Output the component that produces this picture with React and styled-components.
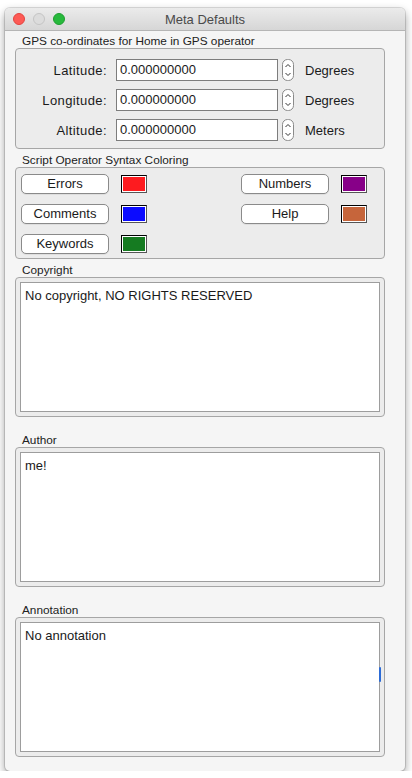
import React from 'react';
import styled, { createGlobalStyle } from 'styled-components';

// Global page reset
const GlobalStyle = createGlobalStyle`
  body {
    margin: 0;
    background: #ffffff;
    font-family: "Liberation Sans", Arial, Helvetica, sans-serif;
    color: #1a1a1a;
  }
`;

// Window chrome
const Window = styled.div`
  margin: 8px 0 0 5px;
  width: 400px;
  height: 763px;
  background: #f5f5f5;
  border-radius: 5px;
  box-shadow: 0 4px 10px rgba(0, 0, 0, 0.4), 0 0 0 1px rgba(0, 0, 0, 0.12);
  overflow: hidden;
  display: flex;
  flex-direction: column;
`;

const TitleBar = styled.div`
  position: relative;
  height: 22px;
  flex: none;
  display: flex;
  align-items: center;
  justify-content: center;
  background: linear-gradient(#ebebeb, #d6d6d6);
  border-bottom: 1px solid #b5b5b5;
  font-size: 13px;
  color: #4a4a4a;
`;

const Lights = styled.div`
  position: absolute;
  left: 8px;
  top: 5px;
  display: flex;
  gap: 8px;
`;

const Light = styled.span`
  width: 12px;
  height: 12px;
  border-radius: 50%;
  box-sizing: border-box;
  background: ${p => p.$color};
  border: 1px solid ${p => p.$edge};
`;

const Content = styled.div`
  padding: 0 20px 0 10px;
  display: flex;
  flex-direction: column;
`;

// Group label and box
const GroupLabel = styled.div`
  font-size: 11.8px;
  line-height: 14px;
  padding-left: 7px;
  margin-top: ${p => p.$gap}px;
  color: #222;
`;

const GroupBox = styled.div`
  position: relative;
  box-sizing: border-box;
  height: ${p => p.$h}px;
  border: 1px solid #a6a6a6;
  border-radius: 4px;
  background: #ececec;
  padding: ${p => p.$pad};
`;

// GPS rows
const GpsGrid = styled.div`
  display: flex;
  flex-direction: column;
  gap: 8px;
`;

const GpsRow = styled.div`
  display: flex;
  align-items: center;
  height: 22px;
`;

const FieldLabel = styled.span`
  width: 86px;
  text-align: right;
  font-size: 13px;
  letter-spacing: 0.4px;
  margin-right: 9px;
`;

const NumInput = styled.div`
  box-sizing: border-box;
  width: 162px;
  height: 22px;
  border: 1px solid #7d7d7d;
  background: #fff;
  font-size: 13px;
  line-height: 20px;
  padding-left: 3px;
`;

const Unit = styled.span`
  font-size: 13px;
  margin-left: 11px;
`;

// Syntax colouring
const ColorGrid = styled.div`
  display: grid;
  grid-template-columns: 220px 130px;
  row-gap: 10px;
`;

const ColorItem = styled.div`
  display: flex;
  align-items: center;
  height: 20px;
  gap: 12px;
`;

const PushButton = styled.div`
  box-sizing: border-box;
  flex: none;
  width: 88px;
  height: 20px;
  border: 1px solid #8a8a8a;
  border-radius: 5px;
  background: #fff;
  font-size: 13px;
  line-height: 18px;
  text-align: center;
  box-shadow: 0 1px 0 rgba(0, 0, 0, 0.06);
`;

const Swatch = styled.span`
  box-sizing: border-box;
  flex: none;
  width: 26px;
  height: 18px;
  border: 1px solid #000;
  border-right-color: #555;
  border-bottom-color: #555;
  box-shadow: inset 0 0 0 1px #fff;
  background: ${p => p.$color};
`;

// Text areas
const TextArea = styled.div`
  box-sizing: border-box;
  height: 100%;
  background: #fff;
  border: 1px solid #9d9d9d;
  font-size: 13px;
  line-height: 16px;
  padding: 5px 4px;
`;

const FocusMark = styled.span`
  position: absolute;
  right: 3px;
  top: 49px;
  width: 2px;
  height: 15px;
  background: #2c6bd6;
  border-radius: 1px;
`;

const Stepper = () => (
  <svg width="12" height="22" viewBox="0 0 12 22" style={{ marginLeft: 4 }}>
    <rect x="0.5" y="0.5" width="11" height="21" rx="5" fill="#fff" stroke="#8a8a8a" />
    <path d="M3.5 8 L6 5.5 L8.5 8" fill="none" stroke="#333" strokeWidth="1" />
    <path d="M3.5 14 L6 16.5 L8.5 14" fill="none" stroke="#333" strokeWidth="1" />
  </svg>
);

const gps = [
  ['Latitude:', 'Degrees'],
  ['Longitude:', 'Degrees'],
  ['Altitude:', 'Meters'],
];

const colors = [
  ['Errors', '#fd1b1f'],
  ['Numbers', '#870088'],
  ['Comments', '#0b0bff'],
  ['Help', '#c6653b'],
  ['Keywords', '#157b21'],
];

const App = () => (
  <>
    <GlobalStyle />
    <Window>
      <TitleBar>
        <Lights>
          <Light $color="#fd5a55" $edge="#e2443f" />
          <Light $color="#dcdcdc" $edge="#c4c4c4" />
          <Light $color="#27b93c" $edge="#1e9d30" />
        </Lights>
        Meta Defaults
      </TitleBar>
      <Content>
        <GroupLabel $gap={3}>GPS co-ordinates for Home in GPS operator</GroupLabel>
        <GroupBox $h={101} $pad="10px 5px 0">
          <GpsGrid>
            {gps.map(([label, unit]) => (
              <GpsRow key={label}>
                <FieldLabel>{label}</FieldLabel>
                <NumInput>0.000000000</NumInput>
                <Stepper />
                <Unit>{unit}</Unit>
              </GpsRow>
            ))}
          </GpsGrid>
        </GroupBox>

        <GroupLabel $gap={4}>Script Operator Syntax Coloring</GroupLabel>
        <GroupBox $h={92} $pad="6px 5px 0">
          <ColorGrid>
            {colors.map(([name, c]) => (
              <ColorItem key={name}>
                <PushButton>{name}</PushButton>
                <Swatch $color={c} />
              </ColorItem>
            ))}
          </ColorGrid>
        </GroupBox>

        <GroupLabel $gap={4}>Copyright</GroupLabel>
        <GroupBox $h={140} $pad="4px">
          <TextArea>No copyright, NO RIGHTS RESERVED</TextArea>
        </GroupBox>

        <GroupLabel $gap={16}>Author</GroupLabel>
        <GroupBox $h={140} $pad="4px">
          <TextArea>me!</TextArea>
        </GroupBox>

        <GroupLabel $gap={16}>Annotation</GroupLabel>
        <GroupBox $h={140} $pad="4px">
          <TextArea>No annotation</TextArea>
          <FocusMark />
        </GroupBox>
      </Content>
    </Window>
  </>
);

export default App;
